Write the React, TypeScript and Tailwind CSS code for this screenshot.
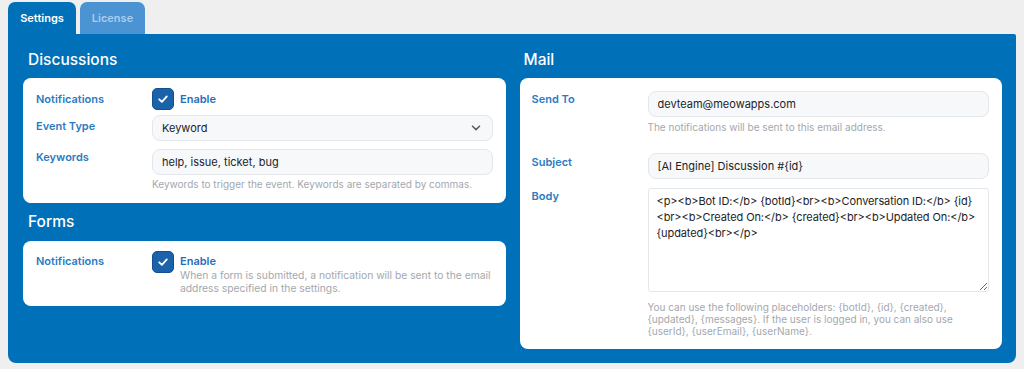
import React from 'react';

const font = { fontFamily: 'Inter, "Noto Sans", sans-serif' };

function Check() {
  return (
    <div className="flex h-[22px] w-[22px] shrink-0 items-center justify-center rounded-[5px] border border-[#12508e] bg-[#1a63ab]">
      <svg width="12" height="12" viewBox="0 0 12 12" fill="none">
        <path d="M2.2 6.3 L4.9 8.9 L9.8 3.4" stroke="white" strokeWidth="1.8" strokeLinecap="round" strokeLinejoin="round" />
      </svg>
    </div>
  );
}

function Label({ children, className = '' }: { children: React.ReactNode; className?: string }) {
  return <div className={`text-[11px] font-semibold leading-4 text-[#2b7bc4] ${className}`}>{children}</div>;
}

function Help({ children, className = '' }: { children: React.ReactNode; className?: string }) {
  return <div className={`text-[10px] leading-[12px] text-[#a3a8ae] ${className}`}>{children}</div>;
}

const inputCls =
  'block h-[26px] w-full rounded-[8px] border border-[#e3e7ec] bg-[#f6f8fa] px-[9px] text-[11px] text-[#1d2327] outline-none';

export default function App() {
  return (
    <div className="h-[369px] w-[1024px] overflow-hidden bg-[#efefef]" style={font}>
      {/* tabs */}
      <div className="flex gap-[4px] pl-[8px] pt-[2px]">
        <div className="flex h-[32px] w-[68px] items-center justify-center rounded-t-[7px] bg-[#0070b9] text-[11px] font-semibold text-white">
          Settings
        </div>
        <div className="flex h-[32px] w-[65px] items-center justify-center rounded-t-[7px] bg-[#4b93d2] text-[11px] font-semibold text-[#a9cdee]">
          License
        </div>
      </div>

      {/* panel */}
      <div className="ml-[8px] grid w-[1008px] grid-cols-2 gap-[14px] rounded-b-[8px] rounded-tr-[2px] bg-[#0070b9] pb-[14px] pl-[15px] pr-[14px] pt-[14px]">
        {/* left column */}
        <div>
          <h2 className="mb-[6px] pl-[5px] text-[15.5px] font-medium leading-6 text-white">Discussions</h2>
          <div className="rounded-[8px] bg-white px-[13px] pb-[13px] pt-[10px]">
            <div className="grid grid-cols-[116px_1fr] items-center">
              <Label>Notifications</Label>
              <div className="flex items-center gap-[6px]">
                <Check />
                <span className="text-[11px] font-semibold text-[#1f70bb]">Enable</span>
              </div>
            </div>
            <div className="mt-[5px] grid grid-cols-[116px_1fr] items-start">
              <Label className="pt-[3px]">Event Type</Label>
              <div className={`${inputCls} flex items-center justify-between`}>
                <span>Keyword</span>
                <svg width="10" height="6" viewBox="0 0 10 6" fill="none" className="mr-[2px]">
                  <path d="M1.5 1.2 L5 4.6 L8.5 1.2" stroke="#5b6168" strokeWidth="1.6" strokeLinecap="round" strokeLinejoin="round" />
                </svg>
              </div>
            </div>
            <div className="mt-[8px] grid grid-cols-[116px_1fr] items-start">
              <Label>Keywords</Label>
              <div>
                <input readOnly value="help, issue, ticket, bug" className={inputCls} />
                <Help className="mt-[3px]">Keywords to trigger the event. Keywords are separated by commas.</Help>
              </div>
            </div>
          </div>

          <h2 className="mb-[7px] mt-[7px] pl-[5px] text-[15.5px] font-medium leading-6 text-white">Forms</h2>
          <div className="rounded-[8px] bg-white px-[13px] pb-[12px] pt-[10px]">
            <div className="grid grid-cols-[116px_1fr] items-start">
              <Label className="pt-[2px]">Notifications</Label>
              <div className="flex items-start gap-[6px]">
                <Check />
                <div className="pt-[2px]">
                  <div className="text-[11px] font-semibold leading-4 text-[#1f70bb]">Enable</div>
                  <div className="text-[10.3px] leading-[12.5px] text-[#a3a8ae]">
                    When a form is submitted, a notification will be sent to the email address specified in the settings.
                  </div>
                </div>
              </div>
            </div>
          </div>
        </div>

        {/* right column */}
        <div>
          <h2 className="mb-[6px] pl-[4px] text-[15.5px] font-medium leading-6 text-white">Mail</h2>
          <div className="rounded-[8px] bg-white pb-[12px] pl-[12px] pr-[13px] pt-[13px]">
            <div className="grid grid-cols-[116px_1fr] items-start">
              <Label>Send To</Label>
              <div>
                <input readOnly value="devteam@meowapps.com" className={inputCls} />
                <Help className="mt-[4px]">The notifications will be sent to this email address.</Help>
              </div>
            </div>
            <div className="mt-[20px] grid grid-cols-[116px_1fr] items-start">
              <Label className="pt-[1px]">Subject</Label>
              <input readOnly value="[AI Engine] Discussion #{id}" className={inputCls} />
            </div>
            <div className="mt-[9px] grid grid-cols-[116px_1fr] items-start">
              <Label>Body</Label>
              <div>
                <textarea
                  readOnly
                  wrap="off"
                  value={'<p><b>Bot ID:</b> {botId}<br><b>Conversation ID:</b> {id}\n<br><b>Created On:</b> {created}<br><b>Updated On:</b>\n{updated}<br></p>'}
                  className="block h-[104px] w-full overflow-hidden rounded-[3px] border border-[#e3e7ec] bg-white px-[8px] py-[4px] text-[11px] leading-4 tracking-[-0.1px] text-[#1d2327] outline-none"
                />
                <Help className="mt-[9px]">
                  You can use the following placeholders: {'{botId}, {id}, {created},'} {'{updated}, {messages}.'} If the user is logged in, you can also use {'{userId}, {userEmail}, {userName}.'}
                </Help>
              </div>
            </div>
          </div>
        </div>
      </div>
    </div>
  );
}
